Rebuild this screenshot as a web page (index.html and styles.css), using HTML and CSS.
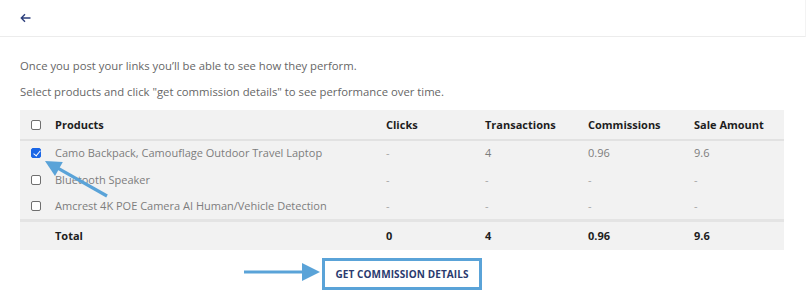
FILE: index.html
```html
<!DOCTYPE html>
<html lang="en">
<head>
    <meta charset="UTF-8">
    <title>Performance</title>
    <link rel="stylesheet" href="styles.css">
</head>
<body>
    <div class="topbar">
        <a class="back" href="#">
            <svg width="11" height="10" viewBox="0 0 11 10"><path d="M10.5 5H1.5M5 1.3L1.3 5L5 8.7" fill="none" stroke="#2d3f7c" stroke-width="1.4"/></svg>
        </a>
    </div>

    <div class="content">
        <p class="intro">Once you post your links you’ll be able to see how they perform.</p>
        <p class="intro">Select products and click "get commission details" to see performance over time.</p>

        <div class="table-wrap">
            <table class="perf">
                <thead>
                    <tr>
                        <th class="check"><span class="box"></span></th>
                        <th class="col-product">Products</th>
                        <th class="col-clicks">Clicks</th>
                        <th class="col-trans">Transactions</th>
                        <th class="col-comm">Commissions</th>
                        <th>Sale Amount</th>
                    </tr>
                </thead>
                <tbody>
                    <tr>
                        <td class="check"><span class="box checked"></span></td>
                        <td>Camo Backpack, Camouflage Outdoor Travel Laptop</td>
                        <td class="dash">-</td>
                        <td>4</td>
                        <td>0.96</td>
                        <td>9.6</td>
                    </tr>
                    <tr>
                        <td class="check"><span class="box"></span></td>
                        <td>Bluetooth Speaker</td>
                        <td class="dash">-</td>
                        <td class="dash">-</td>
                        <td class="dash">-</td>
                        <td class="dash">-</td>
                    </tr>
                    <tr>
                        <td class="check"><span class="box"></span></td>
                        <td>Amcrest 4K POE Camera AI Human/Vehicle Detection</td>
                        <td class="dash">-</td>
                        <td class="dash">-</td>
                        <td class="dash">-</td>
                        <td class="dash">-</td>
                    </tr>
                </tbody>
                <tfoot>
                    <tr>
                        <td class="check"></td>
                        <td>Total</td>
                        <td>0</td>
                        <td>4</td>
                        <td>0.96</td>
                        <td>9.6</td>
                    </tr>
                </tfoot>
            </table>

            <!-- callout pointing at the selected row -->
            <svg class="callout-diag" width="72" height="45" viewBox="0 0 72 45">
                <line x1="65" y1="38" x2="14" y2="9.2" stroke="#5aa3d8" stroke-width="3.2"/>
                <polygon points="3,3 20.8,3.9 13,17.9" fill="#5aa3d8"/>
            </svg>
        </div>

        <div class="actions">
            <div class="btn-wrap">
                <svg class="callout-right" width="78" height="20" viewBox="0 0 78 20">
                    <line x1="0" y1="10" x2="62" y2="10" stroke="#5aa3d8" stroke-width="3.2"/>
                    <polygon points="58,1 76,10 58,19" fill="#5aa3d8"/>
                </svg>
                <button class="btn-details">GET COMMISSION DETAILS</button>
            </div>
        </div>
    </div>
</body>
</html>
```

FILE: styles.css
```css
* {
    margin: 0;
    padding: 0;
    box-sizing: border-box;
}

body {
    font-family: 'Open Sans', 'Liberation Sans', sans-serif;
    background: #ffffff;
    color: #666666;
    width: 808px;
    height: 293px;
    overflow: hidden;
}

.topbar {
    height: 37px;
    width: 806px;
    border-bottom: 1px solid #ececec;
    border-right: 1px solid #f3f3f3;
    padding: 8px 0 0 20px;
}

.back {
    display: block;
    width: 11px;
    height: 10px;
    margin-top: 5px;
    line-height: 0;
}

.content {
    padding: 21px 24px 0 20px;
}

.intro {
    font-size: 11.3px;
    line-height: 16px;
    color: #666666;
    margin-bottom: 10px;
}

.table-wrap {
    position: relative;
    margin-top: 8px;
}

.perf {
    width: 764px;
    border-collapse: collapse;
    background: #f2f2f2;
    font-size: 11px;
    table-layout: fixed;
}

.perf th {
    text-align: left;
    font-weight: 700;
    color: #1e1e1e;
    height: 30px;
    border-bottom: 2px solid #e2e2e2;
}

.perf td {
    color: #7d7d7d;
    height: 27px;
}

.perf tbody tr:first-child td {
    height: 26px;
    padding-bottom: 2px;
}

.perf tfoot td {
    color: #1e1e1e;
    font-weight: 700;
    height: 30px;
    border-top: 3px solid #e4e4e4;
}

.perf .dash {
    color: #a5a5a5;
}

.perf .check {
    width: 35px;
    padding-left: 11px;
}

.col-product { width: 331px; }
.col-clicks { width: 99px; }
.col-trans { width: 103px; }
.col-comm { width: 106px; }

.box {
    display: block;
    width: 10px;
    height: 10px;
    border: 1px solid #6f6f6f;
    border-radius: 2px;
    background: #ffffff;
}

.box.checked {
    background: #1a66e6;
    border-color: #1a66e6;
    position: relative;
}

.box.checked:after {
    content: '';
    position: absolute;
    left: 2.5px;
    top: 0.5px;
    width: 3px;
    height: 6px;
    border: solid #ffffff;
    border-width: 0 1.5px 1.5px 0;
    transform: rotate(40deg);
}

.callout-diag {
    position: absolute;
    left: 22px;
    top: 48px;
}

.actions {
    display: flex;
    justify-content: center;
    padding-top: 8px;
}

.btn-wrap {
    position: relative;
}

.callout-right {
    position: absolute;
    left: -78px;
    top: 4px;
}

.btn-details {
    display: block;
    font-family: 'Open Sans', sans-serif;
    font-size: 10px;
    font-weight: 700;
    color: #2a3a6e;
    background: #ffffff;
    border: 3px solid #5aa3d8;
    padding: 6px 10px;
    letter-spacing: 0.1px;
}
```
